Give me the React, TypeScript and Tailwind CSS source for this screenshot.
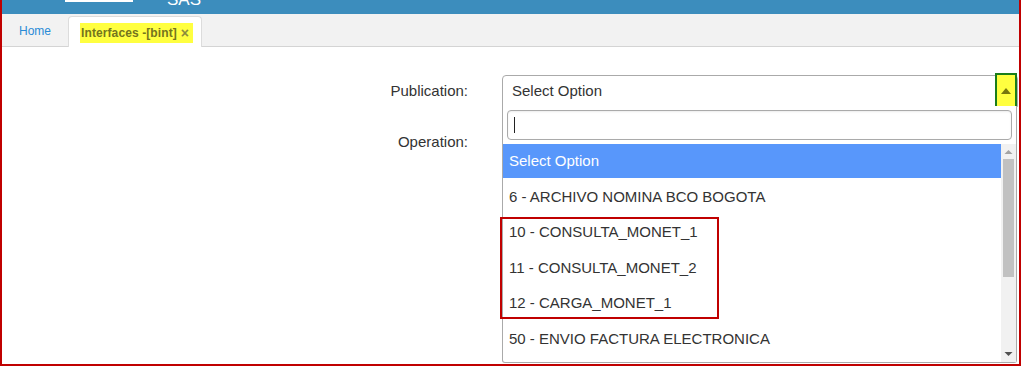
const options = [
  "6 - ARCHIVO NOMINA BCO BOGOTA",
  "10 - CONSULTA_MONET_1",
  "11 - CONSULTA_MONET_2",
  "12 - CARGA_MONET_1",
  "50 - ENVIO FACTURA ELECTRONICA",
];

function TopBar() {
  return (
    <div className="relative h-[14px] overflow-hidden bg-[#3c8dbd]">
      <div className="absolute left-[63px] top-0 h-[2px] w-[68px] bg-white"></div>
      <span className="absolute left-[165px] top-[-10px] text-[17px] leading-[20px] text-white">
        SAS
      </span>
    </div>
  );
}

function Tabs() {
  return (
    <div className="flex h-[33px] items-end border-b border-[#d4d4d4] bg-[#f2f2f2] pl-[17px]">
      <div className="flex h-[31px] items-center text-[12px] text-[#2a8bd6]">
        Home
      </div>
      <div className="-mb-px ml-[17px] flex h-[31px] items-center rounded-t-[4px] border border-b-0 border-[#dcdcdc] bg-white pl-[11px] pr-[8px]">
        <span className="mt-[2px] flex h-[20px] items-center gap-[4px] bg-[#ffff40] pl-[1px] pr-[4px] text-[12px] font-bold tracking-[0.1px] text-[#74741e]">
          Interfaces -[bint]
          <span className="text-[14px] text-[#8c8c3c]">×</span>
        </span>
      </div>
    </div>
  );
}

function Dropdown() {
  return (
    <div className="absolute left-0 right-[1px] top-[31px] flex h-[257px] flex-col rounded-b-[3px] border border-t-0 border-[#aaaaaa] bg-white">
      <div className="px-[4px] pb-[4px] pt-[4px]">
        <div className="flex h-[30px] items-center rounded-[4px] border border-[#aaaaaa] px-[6px] shadow-[inset_0_1px_2px_rgba(0,0,0,0.08)]">
          <span className="h-[16px] w-px bg-[#222]"></span>
        </div>
      </div>
      <div className="flex flex-1">
        <div className="relative flex-1">
          <div className="flex h-[34px] items-center bg-[#5897fb] px-[6px] pt-px text-white">
            Select Option
          </div>
          {options.map((o) => (
            <div key={o} className="flex h-[35.5px] items-center px-[6px] pt-[2px] text-[#333]">
              {o}
            </div>
          ))}
          <div className="absolute left-[-3px] top-[73px] h-[102px] w-[219px] border-2 border-[#c00000]"></div>
        </div>
        <div className="flex w-[15px] flex-col items-center bg-[#f1f1f1]">
          <svg width="9" height="14" viewBox="0 0 9 14" className="mt-[1px]">
            <path d="M0.5 9 L4.5 5 L8.5 9 Z" fill="#a3a3a3" />
          </svg>
          <div className="h-[118px] w-[11px] bg-[#c1c1c1]"></div>
          <div className="flex-1"></div>
          <svg width="9" height="14" viewBox="0 0 9 14" className="mb-[1px]">
            <path d="M0.5 5 L4.5 9 L8.5 5 Z" fill="#505050" />
          </svg>
        </div>
      </div>
    </div>
  );
}

function Form() {
  return (
    <div className="flex flex-col gap-[24px] pt-[28px] text-[15px] text-[#333]">
      <div className="flex items-center">
        <div className="w-[466px] text-right">Publication:</div>
        <div className="relative ml-[34px] mr-[1px] flex-1">
          <div className="flex h-[32px] items-center rounded-t-[4px] border border-[#aaaaaa] px-[9px]">
            Select Option
          </div>
          <div className="absolute right-[1px] top-[-2px] flex h-[35px] w-[22px] items-center justify-center border-2 border-[#1a7d1a] bg-[#ffff40]">
            <svg width="10" height="6" viewBox="0 0 10 6">
              <path d="M0 6 L5 0 L10 6 Z" fill="#77770e" />
            </svg>
          </div>
          <Dropdown />
        </div>
      </div>
      <div className="flex items-center">
        <div className="w-[466px] text-right">Operation:</div>
      </div>
    </div>
  );
}

export default function App() {
  return (
    <div
      className="h-[368px] w-[1021px] overflow-hidden bg-white"
      style={{ fontFamily: '"Liberation Sans", Arial, sans-serif' }}
    >
      <div className="h-[366px] border-x-2 border-b-2 border-[#c00000]">
        <TopBar />
        <Tabs />
        <Form />
      </div>
    </div>
  );
}
